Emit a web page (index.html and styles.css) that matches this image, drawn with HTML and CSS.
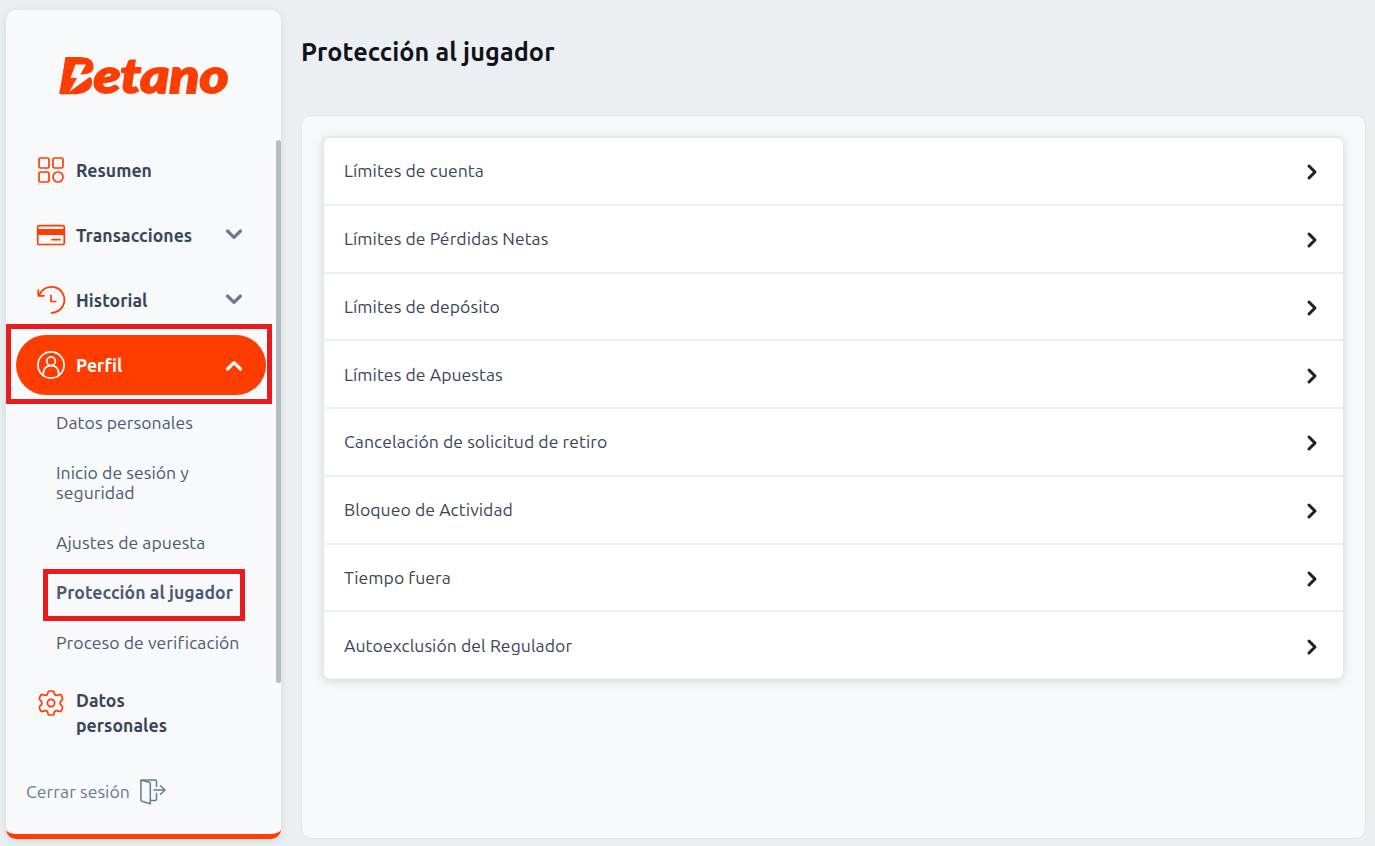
FILE: index.html
```html
<!DOCTYPE html>
<html lang="es">
<head>
  <meta charset="UTF-8">
  <title>Protección al jugador</title>
  <meta name="viewport" content="width=device-width, initial-scale=1.0">
  <link rel="stylesheet" href="styles.css">
</head>
<body>
  <aside class="sidebar">
    <div class="logo">
      <svg width="190" height="70" viewBox="54 40 190 70">
        <text class="logo-text" x="59.500" y="93" textLength="169" lengthAdjust="spacingAndGlyphs">Betano</text>
        <path class="logo-plate" d="M65.500 58H88V72L89 78L84 92L76 94.300H59.200Z"/>
        <path class="logo-bolt" d="M75.500 64.500H86L80.300 74.500L87 74L92.500 71.500L90.500 76.500L69.300 91.800L77 78H70.500Z"/>
      </svg>
    </div>

    <nav class="menu">
      <a class="menu-item">
        <svg class="icon" viewBox="0 0 30 30">
          <rect x="3" y="3" width="10" height="10" rx="1.500"/>
          <rect x="17" y="3" width="10" height="10" rx="1.500"/>
          <rect x="3" y="17" width="10" height="10" rx="1.500"/>
          <circle cx="22" cy="22" r="5"/>
        </svg>
        <span>Resumen</span>
      </a>
      <a class="menu-item">
        <svg class="icon" viewBox="0 0 30 30">
          <rect x="1.700" y="5.700" width="26.600" height="18.800" rx="1.500"/>
          <path class="fill" d="M1.500 9H28.500V15H1.500Z"/>
          <path d="M16 19.600H24"/>
        </svg>
        <span>Transacciones</span>
        <svg class="chevron" viewBox="0 0 18 18"><path d="M2.500 6L9 12.300L15.500 6"/></svg>
      </a>
      <a class="menu-item">
        <svg class="icon" viewBox="0 0 30 30">
          <path d="M3.300 10.200A13 13 0 1 1 15.500 27.800"/>
          <path d="M2.300 5V10.800H8"/>
          <path d="M15 10.300V16.500H19.800"/>
        </svg>
        <span>Historial</span>
        <svg class="chevron" viewBox="0 0 18 18"><path d="M2.500 6L9 12.300L15.500 6"/></svg>
      </a>
      <a class="menu-item active">
        <svg class="icon" viewBox="0 0 30 30">
          <circle cx="15" cy="15" r="13.100"/>
          <circle cx="15" cy="11.200" r="4.300"/>
          <path d="M7.300 25.500V23.500C7.300 18.500 10.500 15.700 15 15.700S22.700 18.500 22.700 23.500V25.500"/>
        </svg>
        <span>Perfil</span>
        <svg class="chevron" viewBox="0 0 18 18"><path d="M2.500 13L9 6.700L15.500 13"/></svg>
        <i class="mark mark-perfil"></i>
      </a>

      <div class="submenu">
        <a>Datos personales</a>
        <a>Inicio de sesión y<br>seguridad</a>
        <a>Ajustes de apuesta</a>
        <a class="current">Protección al jugador<i class="mark mark-jugador"></i></a>
        <a>Proceso de verificación</a>
      </div>

      <a class="menu-item settings">
        <svg class="icon" viewBox="0 0 30 30">
          <path d="M12 4.200Q12.200 3 13.500 3H16.500Q17.800 3 18 4.200Q18.300 7 20 7.400Q21.500 7.600 23.500 6.500Q25 6.300 25.600 7.600L26.400 9.800Q27 11 26 12Q24 13.500 24 15T26 18Q27 19 26.400 20.200L25.600 22.400Q25 23.700 23.500 23.500Q21.500 22.400 20 22.600Q18.300 23 18 25.800Q17.800 27 16.500 27H13.500Q12.200 27 12 25.800Q11.700 23 10 22.600Q8.500 22.400 6.500 23.500Q5 23.700 4.400 22.400L3.600 20.200Q3 19 4 18Q6 16.500 6 15T4 12Q3 11 3.600 9.800L4.400 7.600Q5 6.300 6.500 6.500Q8.500 7.600 10 7.400Q11.700 7 12 4.200Z"/>
          <circle cx="15" cy="15" r="3.600"/>
        </svg>
        <span>Datos<br>personales</span>
      </a>
      <i class="scrollbar"></i>
    </nav>

    <a class="logout">
      <span>Cerrar sesión</span>
      <svg viewBox="0 0 26 26">
        <path d="M.9 1.800Q.9.900 2 .9H15.300Q16.500.900 16.500 2V7.500M16.500 14.500V20.300Q16.500 21.400 15.300 21.400H10.500"/>
        <path d="M1.200 1.200L9.300 3.200Q10.300 3.500 10.300 4.500V24.800L2 22.200Q.9 21.800.9 20.800V1.800"/>
        <path d="M14 11H25M20.500 6.700L25 11L20.500 15.300"/>
      </svg>
    </a>
  </aside>

  <main class="content">
    <h1>Protección al jugador</h1>
    <section class="panel">
      <div class="list">
        <a class="row"><span>Límites de cuenta</span><svg viewBox="0 0 12 18"><path d="M3 3L9 9L3 15"/></svg></a>
        <a class="row"><span>Límites de Pérdidas Netas</span><svg viewBox="0 0 12 18"><path d="M3 3L9 9L3 15"/></svg></a>
        <a class="row"><span>Límites de depósito</span><svg viewBox="0 0 12 18"><path d="M3 3L9 9L3 15"/></svg></a>
        <a class="row"><span>Límites de Apuestas</span><svg viewBox="0 0 12 18"><path d="M3 3L9 9L3 15"/></svg></a>
        <a class="row"><span>Cancelación de solicitud de retiro</span><svg viewBox="0 0 12 18"><path d="M3 3L9 9L3 15"/></svg></a>
        <a class="row"><span>Bloqueo de Actividad</span><svg viewBox="0 0 12 18"><path d="M3 3L9 9L3 15"/></svg></a>
        <a class="row"><span>Tiempo fuera</span><svg viewBox="0 0 12 18"><path d="M3 3L9 9L3 15"/></svg></a>
        <a class="row"><span>Autoexclusión del Regulador</span><svg viewBox="0 0 12 18"><path d="M3 3L9 9L3 15"/></svg></a>
      </div>
    </section>
  </main>
</body>
</html>
```

FILE: styles.css
```css
* {
  box-sizing: border-box;
}

body {
  margin: 0;
  padding: 10px 9px 7px 6px;
  height: 846px;
  display: flex;
  gap: 20px;
  overflow: hidden;
  background: #ebeff2;
  color: #3a4559;
  font-family: Ubuntu, "Noto Sans", sans-serif;
  font-size: 17.6px;
  letter-spacing: 0.06px;
}

svg {
  display: block;
  flex-shrink: 0;
  fill: none;
  stroke: currentColor;
  stroke-linecap: round;
  stroke-linejoin: round;
}

/* sidebar */
.sidebar {
  width: 275px;
  height: 829px;
  flex-shrink: 0;
  display: flex;
  flex-direction: column;
  background: #f7f9fb;
  border-bottom: 5px solid #ff3d00;
  border-radius: 10px;
  box-shadow: 0 2px 8px rgba(60, 75, 95, 0.14);
}

.logo {
  height: 130px;
  padding: 30px 0 0 48px;
}

.logo-text {
  font-family: Lato, sans-serif;
  font-size: 48px;
  font-weight: 900;
  font-style: italic;
  letter-spacing: 0;
  fill: #ff3d00;
  stroke: #ff3d00;
  stroke-width: 1.8;
  stroke-linejoin: miter;
}

.logo-plate {
  fill: #ff3d00;
  stroke: none;
}

.logo-bolt {
  fill: #f7f9fb;
  stroke: none;
}

.menu {
  position: relative;
  display: flex;
  flex-direction: column;
  gap: 5px;
  padding: 0 15px 0 10px;
}

.menu-item {
  position: relative;
  height: 60px;
  display: flex;
  align-items: center;
  gap: 10px;
  padding: 0 23px 0 20px;
  border-radius: 30px;
  font-weight: 700;
  line-height: 25px;
}

.icon {
  width: 30px;
  height: 30px;
  color: #ff3d00;
  stroke-width: 1.7;
}

.icon .fill {
  fill: #ff3d00;
  stroke: none;
}

.chevron {
  width: 18px;
  height: 18px;
  margin: -2px 0.5px 0 auto;
  color: #6b7a90;
  stroke-width: 3.2;
}

.menu-item.active {
  background: #ff3d00;
  color: #fff;
}

.active .icon,
.active .chevron {
  color: #fff;
}

.active .chevron {
  margin-top: 0;
}

.submenu {
  margin-top: -2px;
  padding-left: 40px;
  color: #4b5a73;
}

.submenu a {
  position: relative;
  display: block;
  padding: 15px 0;
  line-height: 20px;
  white-space: nowrap;
}

.submenu .current {
  font-weight: 700;
}

.menu-item.settings {
  height: 50px;
  margin-top: 15px;
  align-items: flex-start;
}

.scrollbar {
  position: absolute;
  top: 0;
  right: 0;
  width: 5px;
  height: 543px;
  border-radius: 3px;
  background: #b3bbc6;
}

/* red frames around the selected entries */
.mark {
  position: absolute;
  border: 5px solid #e81c1f;
}

.mark-perfil {
  top: -11px;
  left: -10px;
  width: 266px;
  height: 80px;
}

.mark-jugador {
  top: 1px;
  left: -13px;
  width: 202px;
  height: 52px;
}

.logout {
  display: flex;
  align-items: center;
  gap: 10px;
  margin-top: 41px;
  padding-left: 20px;
  color: #6b7a90;
}

.logout span {
  padding-bottom: 2px;
}

.logout svg {
  width: 26px;
  height: 26px;
  stroke-width: 1.5;
}

/* content */
.content {
  flex: 1;
}

h1 {
  height: 105px;
  margin: 0;
  padding-top: 24px;
  color: #0f141c;
  font-size: 25.2px;
  line-height: 36px;
  letter-spacing: 0.1px;
}

.panel {
  height: 724px;
  padding: 20px 21px 20px 20px;
  background: #f7f8fa;
  border: 1px solid #e1e5ec;
  border-radius: 10px;
}

.list {
  overflow: hidden;
  height: 544px;
  background: #fff;
  border: 1px solid #e3e7ee;
  border-left-width: 2px;
  border-top-width: 2px;
  border-radius: 8px;
  box-shadow: 0 2px 8px rgba(60, 75, 95, 0.16);
}

.row {
  height: 67.75px;
  display: flex;
  align-items: center;
  justify-content: space-between;
  padding: 0 25px 0 20px;
  border-bottom: 2px solid #ebeef2;
}

.row svg {
  width: 12px;
  height: 18px;
  margin-top: 3px;
  color: #1a1f29;
  stroke-width: 3;
}
```
